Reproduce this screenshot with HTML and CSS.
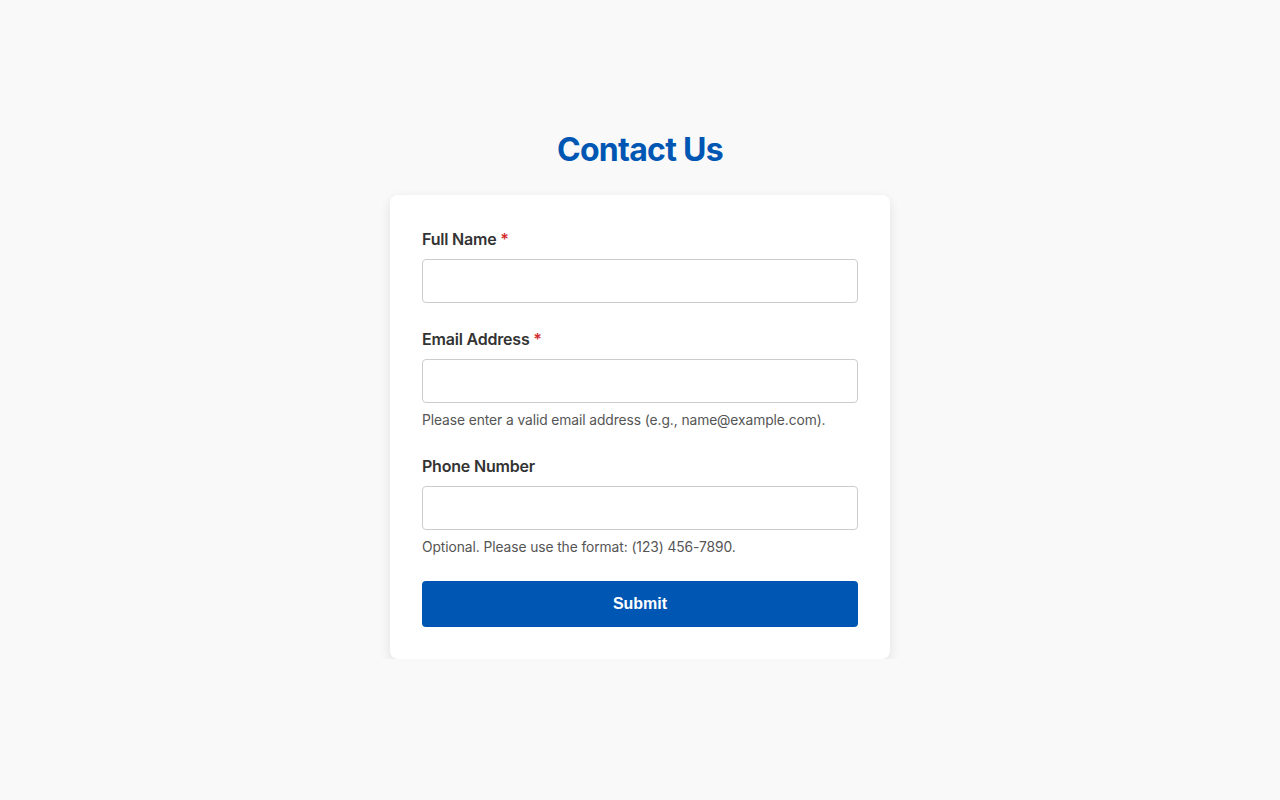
FILE: index.html
```html
<!DOCTYPE html>
<html lang="en">
<head>
<meta charset="utf-8">
<title>Contact Us</title>
<link rel="stylesheet" href="styles.css">
</head>
<body>
<main class="page">
  <h1 class="title">Contact Us</h1>
  <form class="card">
    <div class="field">
      <label class="label" for="name">Full Name <span class="req">*</span></label>
      <input class="input" id="name" type="text">
    </div>
    <div class="field">
      <label class="label" for="email">Email Address <span class="req">*</span></label>
      <input class="input" id="email" type="email">
      <p class="help">Please enter a valid email address (e.g., name@example.com).</p>
    </div>
    <div class="field">
      <label class="label" for="phone">Phone Number</label>
      <input class="input" id="phone" type="tel">
      <p class="help">Optional. Please use the format: (123) 456-7890.</p>
    </div>
    <button class="submit" type="button">Submit</button>
  </form>
</main>
</body>
</html>
```
FILE: styles.css
```css
* { box-sizing: border-box; }
html, body { margin: 0; padding: 0; }
body {
  background: #f9f9f9;
  font-family: Inter, "Noto Sans", sans-serif;
  color: #333;
}
.page {
  display: flex;
  flex-direction: column;
  align-items: center;
  padding-top: 130px;
}
.title {
  margin: 0 0 25px;
  font-size: 32px;
  line-height: 40px;
  font-weight: 700;
  letter-spacing: -0.7px;
  color: #0057b3;
}
.card {
  width: 500px;
  background: #fff;
  border-radius: 8px;
  padding: 32px;
  box-shadow: 0 4px 12px rgba(0, 0, 0, 0.1);
}
.field { margin-bottom: 24px; }
.label {
  display: block;
  font-size: 16px;
  line-height: 24px;
  font-weight: 600;
  letter-spacing: -0.2px;
  color: #333;
  margin-bottom: 8px;
}
.req { color: #d32f2f; }
.input {
  display: block;
  width: 100%;
  height: 44px;
  border: 1px solid #ccc;
  border-radius: 4px;
  background: #fff;
  font: 16px Inter, sans-serif;
  padding: 0 12px;
}
.help {
  margin: 7px 0 0;
  font-size: 13.8px;
  line-height: 20px;
  letter-spacing: -0.08px;
  color: #555;
}
.submit {
  display: block;
  width: 100%;
  height: 46px;
  border: 0;
  border-radius: 4px;
  background: #0057b3;
  color: #fff;
  font-family: "Liberation Sans", Arial, sans-serif;
  font-size: 16px;
  font-weight: 700;
}
```
